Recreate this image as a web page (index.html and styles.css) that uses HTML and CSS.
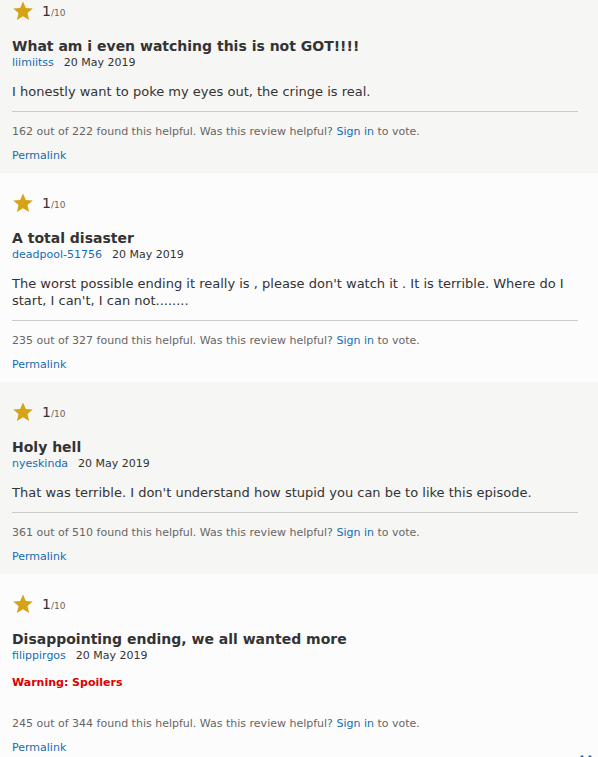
FILE: index.html
```html
<!DOCTYPE html>
<html lang="en">

    <head>
        <meta charset="UTF-8">
        <meta name="viewport" content="width=device-width, initial-scale=1.0">
        <title>User Reviews</title>
        <link rel="stylesheet" href="styles.css">
    </head>

    <body>
        <div class="reviews">
            <div class="review review-gray">
                <div class="rating">
                    <svg class="star" viewBox="0 0 24 24"><path d="M12 1.5l3.1 7.1 7.6.6-5.8 5 1.8 7.5L12 17.7l-6.7 4 1.8-7.5-5.8-5 7.6-.6z"/></svg>
                    <span class="score">1<span class="out-of">/10</span></span>
                </div>
                <div class="title">What am i even watching this is not GOT!!!!</div>
                <div class="meta"><a href="#">liimiitss</a><span class="date">20 May 2019</span></div>
                <div class="text">I honestly want to poke my eyes out, the cringe is real.</div>
                <div class="actions">162 out of 222 found this helpful. Was this review helpful? <a href="#">Sign in</a> to vote.</div>
                <div class="permalink"><a href="#">Permalink</a></div>
            </div>

            <div class="review review-white">
                <div class="rating">
                    <svg class="star" viewBox="0 0 24 24"><path d="M12 1.5l3.1 7.1 7.6.6-5.8 5 1.8 7.5L12 17.7l-6.7 4 1.8-7.5-5.8-5 7.6-.6z"/></svg>
                    <span class="score">1<span class="out-of">/10</span></span>
                </div>
                <div class="title">A total disaster</div>
                <div class="meta"><a href="#">deadpool-51756</a><span class="date">20 May 2019</span></div>
                <div class="text">The worst possible ending it really is , please don't watch it . It is terrible. Where do I start, I can't, I can not........</div>
                <div class="actions">235 out of 327 found this helpful. Was this review helpful? <a href="#">Sign in</a> to vote.</div>
                <div class="permalink"><a href="#">Permalink</a></div>
            </div>

            <div class="review review-gray">
                <div class="rating">
                    <svg class="star" viewBox="0 0 24 24"><path d="M12 1.5l3.1 7.1 7.6.6-5.8 5 1.8 7.5L12 17.7l-6.7 4 1.8-7.5-5.8-5 7.6-.6z"/></svg>
                    <span class="score">1<span class="out-of">/10</span></span>
                </div>
                <div class="title">Holy hell</div>
                <div class="meta"><a href="#">nyeskinda</a><span class="date">20 May 2019</span></div>
                <div class="text">That was terrible. I don't understand how stupid you can be to like this episode.</div>
                <div class="actions">361 out of 510 found this helpful. Was this review helpful? <a href="#">Sign in</a> to vote.</div>
                <div class="permalink"><a href="#">Permalink</a></div>
            </div>

            <div class="review review-white">
                <div class="rating">
                    <svg class="star" viewBox="0 0 24 24"><path d="M12 1.5l3.1 7.1 7.6.6-5.8 5 1.8 7.5L12 17.7l-6.7 4 1.8-7.5-5.8-5 7.6-.6z"/></svg>
                    <span class="score">1<span class="out-of">/10</span></span>
                </div>
                <div class="title">Disappointing ending, we all wanted more</div>
                <div class="meta"><a href="#">filippirgos</a><span class="date">20 May 2019</span></div>
                <div class="spoiler">Warning: Spoilers</div>
                <div class="actions">245 out of 344 found this helpful. Was this review helpful? <a href="#">Sign in</a> to vote.</div>
                <div class="permalink"><a href="#">Permalink</a></div>
            </div>
        </div>

        <a class="scroll-down" href="#">
            <svg viewBox="0 0 14 10"><path d="M2 2l5 5 5-5"/></svg>
        </a>
    </body>

</html>
```

FILE: styles.css
```css
body {
    font-family: "DejaVu Sans", Verdana, sans-serif;
    margin: 0;
    padding: 0;
    background-color: #fdfdfd;
    color: #333;
    overflow: hidden;
}

a {
    color: #136cb2;
    text-decoration: none;
}

/* list is scrolled a little, first card is cut at the top */
.reviews {
    margin-top: -19px;
}

.review {
    padding: 19px 0 10px 12px;
}

.review-gray {
    background-color: #f6f6f5;
}

.review-white {
    background-color: #fdfcfd;
}

.rating {
    display: flex;
    align-items: center;
    gap: 8px;
    height: 22px;
}

.star {
    width: 22px;
    height: 22px;
    fill: #d6a216;
}

.score {
    font-size: 14px;
    color: #333;
}

.out-of {
    font-size: 9px;
    color: #666;
}

.title {
    margin-top: 15px;
    font-size: 14px;
    font-weight: bold;
    line-height: 18px;
    color: #333;
}

.meta {
    font-size: 11px;
    line-height: 15px;
}

.date {
    margin-left: 10px;
    color: #333;
}

.text {
    margin-top: 13px;
    margin-right: 20px;
    font-size: 13px;
    line-height: 17px;
    padding-bottom: 11px;
    border-bottom: 1px solid #ccc;
}

.spoiler {
    margin-top: 13px;
    font-size: 11px;
    font-weight: bold;
    line-height: 14px;
    padding-bottom: 14px;
    color: #d00;
}

.actions {
    margin-top: 13px;
    font-size: 11px;
    line-height: 14px;
    color: #666;
}

.permalink {
    margin-top: 10px;
    font-size: 11px;
    line-height: 14px;
}

.scroll-down {
    position: fixed;
    right: 5px;
    bottom: -2px;
    width: 14px;
    height: 10px;
}

.scroll-down svg {
    width: 14px;
    height: 10px;
    fill: none;
    stroke: #2c5f9e;
    stroke-width: 3;
}
```
